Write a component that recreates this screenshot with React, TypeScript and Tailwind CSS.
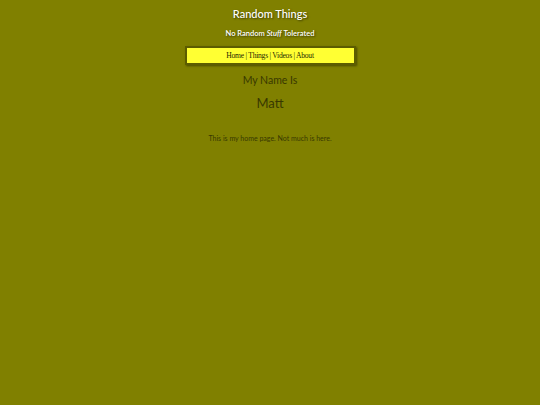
import React from 'react';

export default function App() {
  return (
    <div className="min-h-[405px] w-full bg-[#808000] font-['Lato',_'Noto_Sans',_sans-serif] text-center">
      <header className="pt-[7px]">
        <h1 className="text-[11px] font-medium leading-[14px] text-white [text-shadow:1px_1px_2px_#3a3a00]">
          Random Things
        </h1>
        <p className="mt-[7px] text-[7.5px] font-semibold leading-[11px] text-white [text-shadow:1px_1px_2px_#3a3a00]">
          No Random <em>Stuff</em> Tolerated
        </p>
      </header>

      <nav className="mx-auto mt-[7px] w-[171px] border-2 border-[#5c5c00] bg-[#ffff33] py-[2px] shadow-[1px_1px_2px_#4a4a00]">
        <p className="font-['Liberation_Serif',_serif] text-[7.6px] leading-[11px] tracking-[-0.25px] text-[#1f1f00]">
          <a href="#">Home</a> | <a href="#">Things</a> | <a href="#">Videos</a> | <a href="#">About</a>
        </p>
      </nav>

      <main className="pt-[8px]">
        <h2 className="text-[10.5px] font-normal leading-[14px] text-[#383800]">My Name Is</h2>
        <h3 className="mt-[7px] text-[13px] font-normal leading-[18px] text-[#383800]">Matt</h3>
        <p className="mt-[21px] text-[7px] leading-[10px] text-[#383800]">
          This is my home page. Not much is here.
        </p>
      </main>
    </div>
  );
}
